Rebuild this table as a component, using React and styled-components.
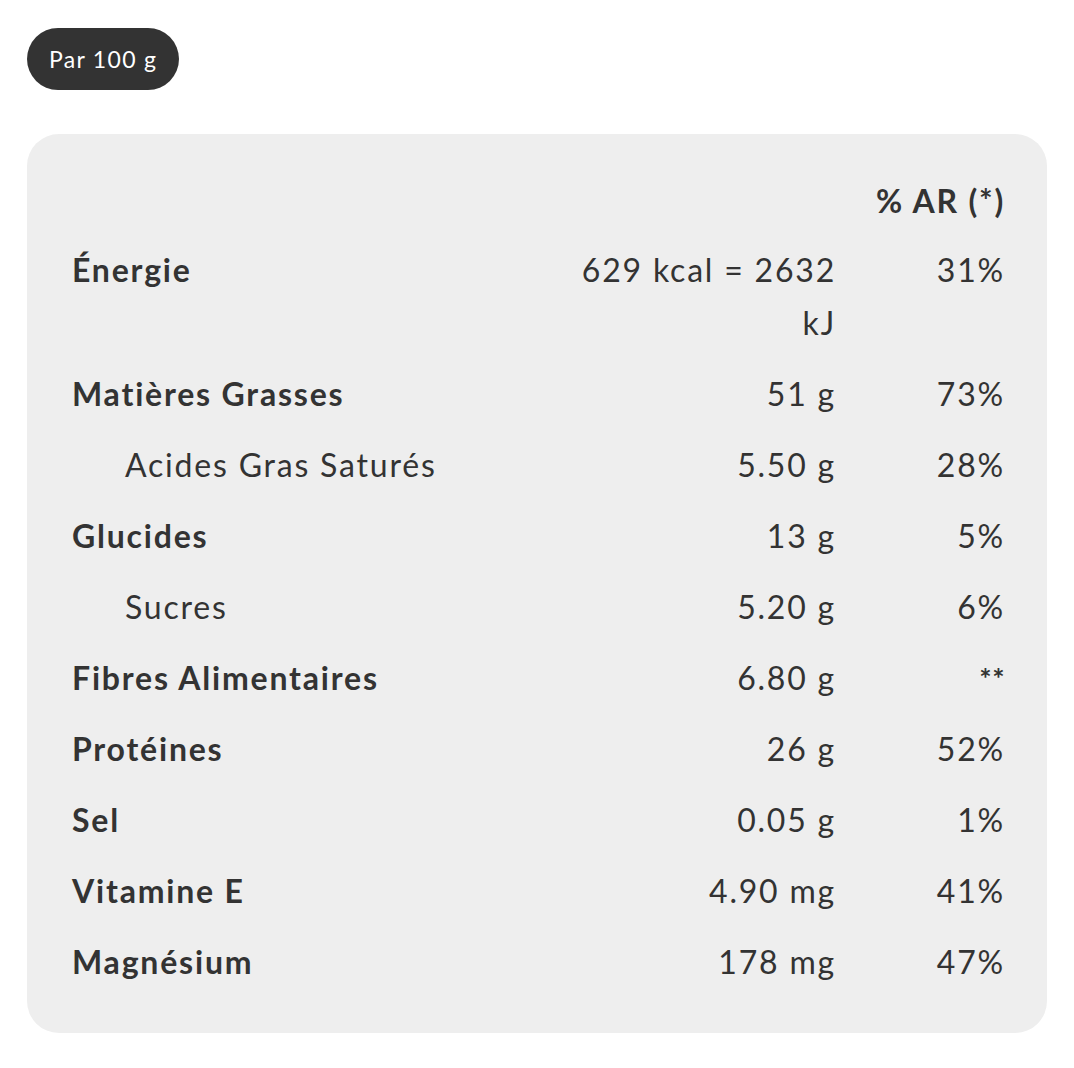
import React from "react";
import styled, { createGlobalStyle } from "styled-components";

const GlobalStyle = createGlobalStyle`
  body {
    margin: 0;
    background: #fff;
    font-family: Lato, "Open Sans", sans-serif;
    color: #333;
  }
`;

const rows = [
  { name: "Énergie", value: "629 kcal = 2632 kJ", pct: "31%" },
  { name: "Matières Grasses", value: "51 g", pct: "73%" },
  { name: "Acides Gras Saturés", value: "5.50 g", pct: "28%", sub: true },
  { name: "Glucides", value: "13 g", pct: "5%" },
  { name: "Sucres", value: "5.20 g", pct: "6%", sub: true },
  { name: "Fibres Alimentaires", value: "6.80 g", pct: "**", small: true },
  { name: "Protéines", value: "26 g", pct: "52%" },
  { name: "Sel", value: "0.05 g", pct: "1%" },
  { name: "Vitamine E", value: "4.90 mg", pct: "41%" },
  { name: "Magnésium", value: "178 mg", pct: "47%" },
];

export default function App() {
  return (
    <>
      <GlobalStyle />
      <Page>
        <Pill>Par 100 g</Pill>
        <Card>
          <Table>
            <HeadCell />
            <HeadCell />
            <HeadCell $right>% AR (*)</HeadCell>
            {rows.map((r) => (
              <React.Fragment key={r.name}>
                <Name $sub={r.sub}>{r.name}</Name>
                <Value>{r.value}</Value>
                <Pct $small={r.small}>{r.pct}</Pct>
              </React.Fragment>
            ))}
          </Table>
        </Card>
      </Page>
    </>
  );
}

const Page = styled.div`
  padding: 28px 27px 35px;
  display: flex;
  flex-direction: column;
  align-items: flex-start;
  gap: 44px;
`;

const Pill = styled.div`
  height: 62px;
  padding: 0 22px 0 22px;
  display: flex;
  align-items: center;
  border-radius: 31px;
  background: #333;
  color: #fff;
  font-size: 23px;
  letter-spacing: 1.3px;
  box-sizing: border-box;
`;

const Card = styled.div`
  align-self: stretch;
  background: #eeeeee;
  border-radius: 32px;
  padding: 32px 42px 36px 45px;
`;

const Table = styled.div`
  display: grid;
  grid-template-columns: 1fr 260px 169px;
  font-size: 32px;
  line-height: 53px;
  letter-spacing: 1.8px;
`;

const HeadCell = styled.div`
  font-weight: 700;
  text-align: ${(p) => (p.$right ? "right" : "left")};
  padding: 8px 0 7px;
`;

const Name = styled.div`
  font-weight: ${(p) => (p.$sub ? 400 : 700)};
  padding: 9px 0 9px ${(p) => (p.$sub ? "53px" : "0")};
`;

const Value = styled.div`
  text-align: right;
  padding: 9px 0;
`;

const Pct = styled.div`
  text-align: right;
  padding: 9px 0;
  font-size: ${(p) => (p.$small ? "29px" : "inherit")};
  font-weight: ${(p) => (p.$small ? 700 : 400)};
  letter-spacing: ${(p) => (p.$small ? "0.5px" : "inherit")};
`;
